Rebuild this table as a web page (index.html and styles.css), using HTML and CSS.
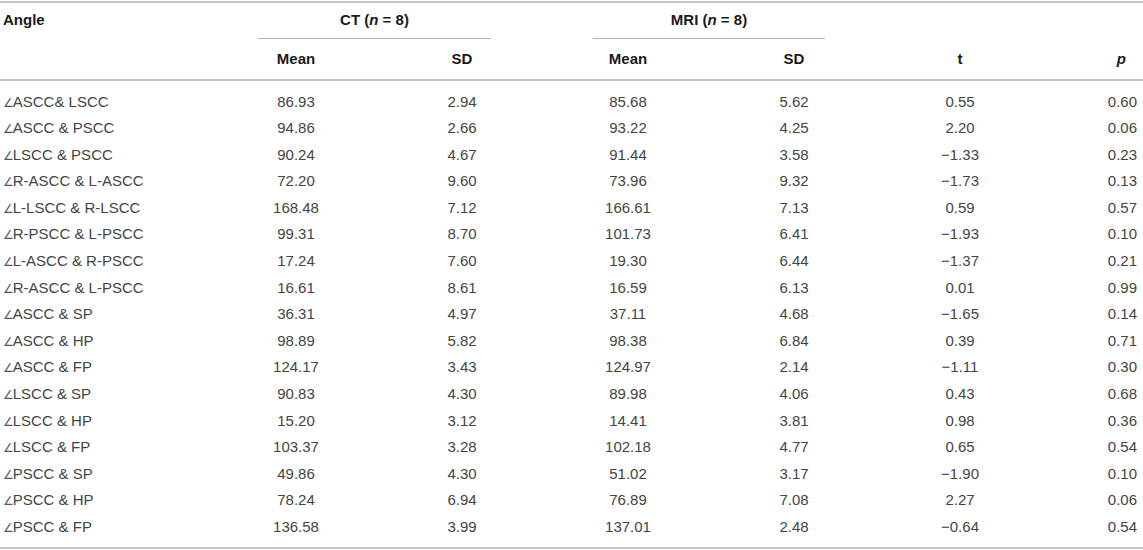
FILE: index.html
```html
<!DOCTYPE HTML>
<html>
	<head>
		<title>CT vs MRI angles</title>
		<link rel="stylesheet" href="styles.css">
	</head>
	<body>
		<div class="wrap">
		<table class="angles">
			<colgroup>
				<col class="c-angle">
				<col class="c-num">
				<col class="c-num">
				<col class="c-num">
				<col class="c-num">
				<col class="c-num">
				<col class="c-p">
			</colgroup>
			<thead>
				<tr class="top">
					<th class="name">Angle</th>
					<th colspan="2" class="group ct"><div>CT (<i>n</i> = 8)</div></th>
					<th colspan="2" class="group mri"><div>MRI (<i>n</i> = 8)</div></th>
					<th></th>
					<th></th>
				</tr>
				<tr class="sub">
					<th></th>
					<th>Mean</th>
					<th>SD</th>
					<th>Mean</th>
					<th>SD</th>
					<th>t</th>
					<th class="pv"><i>p</i></th>
				</tr>
			</thead>
			<tbody>
				<tr class="first"><td><span class="ang">∠</span>ASCC&amp; LSCC</td><td>86.93</td><td>2.94</td><td>85.68</td><td>5.62</td><td>0.55</td><td>0.60</td></tr>
				<tr><td><span class="ang">∠</span>ASCC &amp; PSCC</td><td>94.86</td><td>2.66</td><td>93.22</td><td>4.25</td><td>2.20</td><td>0.06</td></tr>
				<tr><td><span class="ang">∠</span>LSCC &amp; PSCC</td><td>90.24</td><td>4.67</td><td>91.44</td><td>3.58</td><td>−1.33</td><td>0.23</td></tr>
				<tr><td><span class="ang">∠</span>R-ASCC &amp; L-ASCC</td><td>72.20</td><td>9.60</td><td>73.96</td><td>9.32</td><td>−1.73</td><td>0.13</td></tr>
				<tr><td><span class="ang">∠</span>L-LSCC &amp; R-LSCC</td><td>168.48</td><td>7.12</td><td>166.61</td><td>7.13</td><td>0.59</td><td>0.57</td></tr>
				<tr><td><span class="ang">∠</span>R-PSCC &amp; L-PSCC</td><td>99.31</td><td>8.70</td><td>101.73</td><td>6.41</td><td>−1.93</td><td>0.10</td></tr>
				<tr><td><span class="ang">∠</span>L-ASCC &amp; R-PSCC</td><td>17.24</td><td>7.60</td><td>19.30</td><td>6.44</td><td>−1.37</td><td>0.21</td></tr>
				<tr><td><span class="ang">∠</span>R-ASCC &amp; L-PSCC</td><td>16.61</td><td>8.61</td><td>16.59</td><td>6.13</td><td>0.01</td><td>0.99</td></tr>
				<tr><td><span class="ang">∠</span>ASCC &amp; SP</td><td>36.31</td><td>4.97</td><td>37.11</td><td>4.68</td><td>−1.65</td><td>0.14</td></tr>
				<tr><td><span class="ang">∠</span>ASCC &amp; HP</td><td>98.89</td><td>5.82</td><td>98.38</td><td>6.84</td><td>0.39</td><td>0.71</td></tr>
				<tr><td><span class="ang">∠</span>ASCC &amp; FP</td><td>124.17</td><td>3.43</td><td>124.97</td><td>2.14</td><td>−1.11</td><td>0.30</td></tr>
				<tr><td><span class="ang">∠</span>LSCC &amp; SP</td><td>90.83</td><td>4.30</td><td>89.98</td><td>4.06</td><td>0.43</td><td>0.68</td></tr>
				<tr><td><span class="ang">∠</span>LSCC &amp; HP</td><td>15.20</td><td>3.12</td><td>14.41</td><td>3.81</td><td>0.98</td><td>0.36</td></tr>
				<tr><td><span class="ang">∠</span>LSCC &amp; FP</td><td>103.37</td><td>3.28</td><td>102.18</td><td>4.77</td><td>0.65</td><td>0.54</td></tr>
				<tr><td><span class="ang">∠</span>PSCC &amp; SP</td><td>49.86</td><td>4.30</td><td>51.02</td><td>3.17</td><td>−1.90</td><td>0.10</td></tr>
				<tr><td><span class="ang">∠</span>PSCC &amp; HP</td><td>78.24</td><td>6.94</td><td>76.89</td><td>7.08</td><td>2.27</td><td>0.06</td></tr>
				<tr class="last"><td><span class="ang">∠</span>PSCC &amp; FP</td><td>136.58</td><td>3.99</td><td>137.01</td><td>2.48</td><td>−0.64</td><td>0.54</td></tr>
			</tbody>
		</table>
		</div>
	</body>
</html>
```

FILE: styles.css
```css
  body {
	margin: 0;
	background: #fff;
	font-family: "Liberation Sans", Arial, "DejaVu Sans", sans-serif;
	font-size: 15px;
  }
  .wrap {
	padding-top: 1px;
  }
  .angles {
	width: 1143px;
	border-collapse: collapse;
	table-layout: fixed;
	border-top: 2px solid #c4c4c4;
	border-bottom: 2px solid #c4c4c4;
  }
  .c-angle { width: 213px; }
  .c-num { width: 166px; }
  .c-p { width: 100px; }
  th {
	color: #1a1a1a;
	font-weight: bold;
	line-height: 18px;
	text-align: center;
	padding: 0;
  }
  .top th {
	padding-top: 8px;
	vertical-align: top;
  }
  .top th.name {
	text-align: left;
	padding-left: 3px;
  }
  .group div {
	padding-bottom: 9px;
	border-bottom: 1px solid #b4b4b4;
  }
  .group.ct div {
	margin: 0 54px 0 45px;
  }
  .group.mri div {
	margin: 0 52px 0 48px;
  }
  .sub th {
	padding: 11px 0 11px;
	border-bottom: 2px solid #c4c4c4;
  }
  .sub th.pv {
	text-align: right;
	padding-right: 17px;
  }
  td {
	color: #444;
	line-height: 18px;
	height: 18px;
	padding: 4.3px 0;
	text-align: center;
  }
  td:first-child {
	text-align: left;
	padding-left: 3px;
  }
  td:last-child {
	text-align: right;
	padding-right: 6px;
  }
  .ang {
	font-size: 12px;
	line-height: 10px;
	letter-spacing: -1px;
	color: #555;
  }
  tr.first td {
	padding-top: 11.5px;
  }
  tr.last td {
	padding-bottom: 10.5px;
  }
```
